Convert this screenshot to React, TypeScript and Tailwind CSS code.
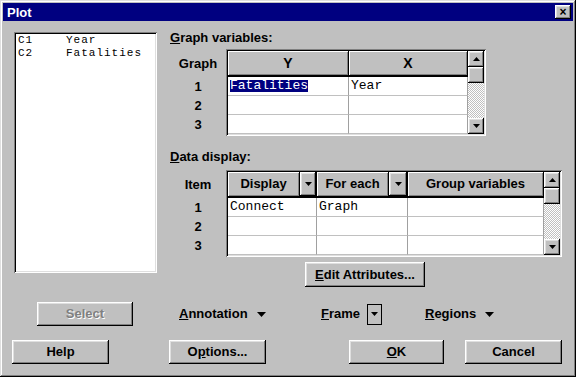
import type { ReactNode } from 'react';

const sans = "font-['Liberation_Sans',Arial,sans-serif]";
const mono = "font-['Liberation_Mono','Courier_New',monospace]";

const winFrame =
  'shadow-[inset_-1px_-1px_#000,inset_1px_1px_#dfdfdf,inset_-2px_-2px_#808080,inset_2px_2px_#fff]';
const raised =
  'shadow-[inset_-1px_-1px_#000,inset_1px_1px_#fff,inset_-2px_-2px_#808080,inset_2px_2px_#dfdfdf]';
const sunken =
  'shadow-[inset_1px_1px_#808080,inset_-1px_-1px_#fff,inset_2px_2px_#000,inset_-2px_-2px_#dfdfdf]';
const headCell =
  'flex items-center justify-center bg-[#c0c0c0] border-r border-b-2 border-black shadow-[inset_1px_1px_#fff,inset_-1px_-1px_#808080]';
const dither =
  'bg-[image:repeating-conic-gradient(#c0c0c0_0%_25%,#ffffff_0%_50%)] bg-[length:2px_2px]';

function Tri({ up, big }: { up?: boolean; big?: boolean }) {
  const w = big ? 9 : 7;
  const h = big ? 5 : 4;
  return (
    <svg width={w} height={h} viewBox={`0 0 ${w} ${h}`}>
      <polygon points={up ? `${w / 2},0 ${w},${h} 0,${h}` : `0,0 ${w},0 ${w / 2},${h}`} fill="#000" />
    </svg>
  );
}

function ScrollBar() {
  return (
    <div className="flex w-[16px] flex-col">
      <div className={`flex h-[16px] items-center justify-center bg-[#c0c0c0] ${raised}`}>
        <Tri up />
      </div>
      <div className={`h-[16px] bg-[#c0c0c0] ${raised}`} />
      <div className={`flex-1 ${dither}`} />
      <div className={`flex h-[16px] items-center justify-center bg-[#c0c0c0] ${raised}`}>
        <Tri />
      </div>
    </div>
  );
}

function Btn({ w, children, disabled }: { w: string; children: ReactNode; disabled?: boolean }) {
  return (
    <div
      className={`flex h-[24px] items-center justify-center bg-[#c0c0c0] text-[13px] font-bold ${w} ${raised} ${
        disabled ? 'text-[#808080] [text-shadow:1px_1px_0_#fff]' : 'text-black'
      }`}
    >
      {children}
    </div>
  );
}

function DropBtn({ w }: { w: string }) {
  return (
    <div className={`flex items-center justify-center border-b-2 border-r border-black bg-[#c0c0c0] ${w}`}>
      <div className={`flex h-full w-full items-center justify-center ${raised}`}>
        <Tri />
      </div>
    </div>
  );
}

function RowLabels({ head, rows }: { head: string; rows: string[] }) {
  return (
    <div className="flex w-[56px] flex-col items-center pt-[2px] text-[13px] font-bold">
      <div className="flex h-[26px] items-center">{head}</div>
      {rows.map((r) => (
        <div key={r} className="flex h-[19px] items-center">
          {r}
        </div>
      ))}
    </div>
  );
}

const cell = 'flex h-[19px] items-center border-b border-r border-b-[#c0c0c0] border-r-[#a0a0a0] bg-white pl-[2px] text-[13px]';

export default function App() {
  const gv = [
    ['Fatalities', 'Year'],
    ['', ''],
    ['', ''],
  ];
  const dd = [
    ['Connect', 'Graph', ''],
    ['', '', ''],
    ['', '', ''],
  ];

  return (
    <div className={`flex h-[377px] w-[576px] flex-col bg-[#c0c0c0] p-[3px] text-black ${sans} ${winFrame}`}>
      {/* title bar */}
      <div className="flex h-[18px] items-center justify-between bg-[#000080] pl-[4px] pr-[2px]">
        <span className="text-[13px] font-bold leading-none text-white">Plot</span>
        <div className={`flex h-[14px] w-[16px] items-center justify-center bg-[#c0c0c0] text-[12px] font-bold leading-none ${raised}`}>
          ×
        </div>
      </div>

      {/* main area */}
      <div className="mt-[10px] flex">
        <div className={`ml-[11px] mt-[1px] h-[241px] w-[143px] bg-white px-[4px] pt-[2px] ${sunken} ${mono} text-[11px] leading-[13px] tracking-[1px]`}>
          <div className="flex h-[13px]">
            <span className="w-[48px]">C1</span>
            <span>Year</span>
          </div>
          <div className="flex h-[13px]">
            <span className="w-[48px]">C2</span>
            <span>Fatalities</span>
          </div>
        </div>

        <div className="ml-[13px] flex flex-col">
          <div className="h-[14px] text-[13px] font-bold leading-[14px]">
            <u>G</u>raph variables:
          </div>
          <div className="mt-[4px] flex">
            <RowLabels head="Graph" rows={['1', '2', '3']} />
            <div className={`bg-white p-[2px] ${sunken}`}>
              <div className="flex">
                <div className="w-[240px]">
                  <div className="flex h-[26px] text-[14px] font-bold">
                    <div className={`w-[121px] ${headCell}`}>Y</div>
                    <div className={`w-[119px] ${headCell}`}>X</div>
                  </div>
                  {gv.map((r, i) => (
                    <div key={i} className={`flex ${mono}`}>
                      <div className={`w-[121px] ${cell}`}>
                        {r[0] && <span className="bg-[#000080] leading-[12px] text-white">{r[0]}</span>}
                      </div>
                      <div className={`w-[119px] ${cell}`}>{r[1]}</div>
                    </div>
                  ))}
                </div>
                <ScrollBar />
              </div>
            </div>
          </div>

          <div className="mt-[14px] h-[14px] text-[13px] font-bold leading-[14px]">
            <u>D</u>ata display:
          </div>
          <div className="mt-[6px] flex">
            <RowLabels head="Item" rows={['1', '2', '3']} />
            <div className={`bg-white p-[2px] ${sunken}`}>
              <div className="flex">
                <div className="w-[316px]">
                  <div className="flex h-[26px] text-[13px] font-bold">
                    <div className={`w-[72px] ${headCell}`}>Display</div>
                    <DropBtn w="w-[17px]" />
                    <div className={`w-[72px] ${headCell}`}>For each</div>
                    <DropBtn w="w-[19px]" />
                    <div className={`w-[136px] ${headCell}`}>Group variables</div>
                  </div>
                  {dd.map((r, i) => (
                    <div key={i} className={`flex ${mono}`}>
                      <div className={`w-[89px] ${cell}`}>{r[0]}</div>
                      <div className={`w-[91px] ${cell}`}>{r[1]}</div>
                      <div className={`w-[136px] ${cell}`}>{r[2]}</div>
                    </div>
                  ))}
                </div>
                <ScrollBar />
              </div>
            </div>
          </div>

          <div className="ml-[135px] mt-[5px]">
            <div className={`flex h-[25px] w-[120px] items-center justify-center bg-[#c0c0c0] text-[13px] font-bold ${raised}`}>
              <span>
                <u>E</u>dit Attributes...
              </span>
            </div>
          </div>
        </div>
      </div>

      {/* option row */}
      <div className="mt-[15px] flex h-[24px] items-center text-[13px] font-bold">
        <div className="ml-[34px]">
          <Btn w="w-[96px]" disabled>
            Select
          </Btn>
        </div>
        <div className="ml-[46px] flex w-[142px] items-center gap-[9px]">
          <span>
            <u>A</u>nnotation
          </span>
          <Tri big />
        </div>
        <div className="flex w-[104px] items-center gap-[7px]">
          <span>
            <u>F</u>rame
          </span>
          <div className="flex h-[21px] w-[15px] items-center justify-center border border-black bg-[#c0c0c0]">
            <Tri />
          </div>
        </div>
        <div className="flex items-center gap-[9px]">
          <span>
            <u>R</u>egions
          </span>
          <Tri big />
        </div>
      </div>

      {/* buttons */}
      <div className="mt-[14px] flex">
        <div className="ml-[9px]">
          <Btn w="w-[97px]">Help</Btn>
        </div>
        <div className="ml-[60px]">
          <Btn w="w-[97px]">
            <span>
              O<u>p</u>tions...
            </span>
          </Btn>
        </div>
        <div className="ml-[83px]">
          <Btn w="w-[95px]">
            <span>
              <u>O</u>K
            </span>
          </Btn>
        </div>
        <div className="ml-[21px]">
          <Btn w="w-[97px]">Cancel</Btn>
        </div>
      </div>
    </div>
  );
}
